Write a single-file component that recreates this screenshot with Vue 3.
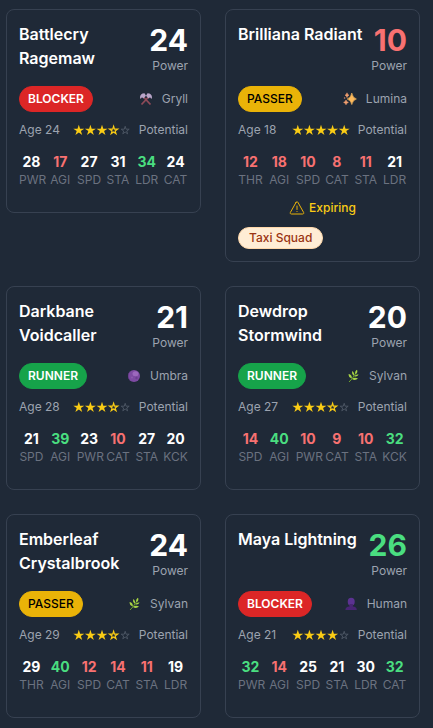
<script setup>
const starPath = 'M5.8 0.7 L7.1 4.7 L11.3 4.7 L7.9 7.1 L9.2 11.1 L5.8 8.6 L2.4 11.1 L3.7 7.1 L0.3 4.7 L4.5 4.7 Z'
const starOutline = 'M5.8 2.3 L6.7 5.2 L9.8 5.2 L7.3 7 L8.2 9.8 L5.8 8.1 L3.4 9.8 L4.3 7 L1.8 5.2 L4.9 5.2 Z'

const toStats = (labels, values) =>
  labels.split(' ').map((label, i) => ({ label, value: values[i] }))

const players = [
  { name: 'Battlecry Ragemaw', power: 24, role: 'Blocker', race: 'Gryll', age: 24, rating: 3.5,
    stats: toStats('PWR AGI SPD STA LDR CAT', [28, 17, 27, 31, 34, 24]) },
  { name: 'Brilliana Radiant', power: 10, role: 'Passer', race: 'Lumina', age: 18, rating: 5,
    stats: toStats('THR AGI SPD CAT STA LDR', [12, 18, 10, 8, 11, 21]), expiring: true, taxi: true },
  { name: 'Darkbane Voidcaller', power: 21, role: 'Runner', race: 'Umbra', age: 28, rating: 3.5,
    stats: toStats('SPD AGI PWR CAT STA KCK', [21, 39, 23, 10, 27, 20]) },
  { name: 'Dewdrop Stormwind', power: 20, role: 'Runner', race: 'Sylvan', age: 27, rating: 3.5,
    stats: toStats('SPD AGI PWR CAT STA KCK', [14, 40, 10, 9, 10, 32]) },
  { name: 'Emberleaf Crystalbrook', power: 24, role: 'Passer', race: 'Sylvan', age: 29, rating: 3.5,
    stats: toStats('THR AGI SPD CAT STA LDR', [29, 40, 12, 14, 11, 19]) },
  { name: 'Maya Lightning', power: 26, role: 'Blocker', race: 'Human', age: 21, rating: 4,
    stats: toStats('PWR AGI SPD STA LDR CAT', [32, 14, 25, 21, 30, 32]) }
]

const statTone = (v) => (v >= 32 ? 'high' : v <= 18 ? 'low' : '')
const powerTone = (v) => (v > 25 ? 'high' : v < 19 ? 'low' : '')
const starKind = (n, rating) => (n <= rating ? 'full' : n - 0.5 <= rating ? 'half' : 'empty')
</script>

<template>
  <main class="roster">
    <article v-for="p in players" :key="p.name" class="card">
      <header class="head">
        <h3 class="name">{{ p.name }}</h3>
        <div class="power">
          <div class="power-value" :class="powerTone(p.power)">{{ p.power }}</div>
          <div class="muted">Power</div>
        </div>
      </header>

      <div class="row role-row">
        <span class="role" :class="p.role.toLowerCase()">{{ p.role.toUpperCase() }}</span>
        <span class="race muted">
          <svg class="race-icon" viewBox="0 0 16 16" aria-hidden="true">
            <g v-if="p.race === 'Gryll'">
              <path d="M4.5 5 L12.5 13.5 M11.5 5 L3.5 13.5" stroke="#8f4a58" stroke-width="1.8" />
              <path d="M2 6.5 C2 4 3.5 2.3 6.5 2.2 L8 4.8 L5.5 7.5 L4 6.3 L2.6 8 Z" fill="#b9a5c9" />
              <path d="M14 6.5 C14 4 12.500 2.3 9.5 2.2 L8 4.8 L10.500 7.500 L12 6.3 L13.4 8 Z" fill="#b9a5c9" />
            </g>
            <g v-else-if="p.race === 'Lumina'">
              <path d="M9.800 2 Q10.600 6.800 14.400 8 Q10.600 9.200 9.800 13.600 Q9 9.200 5.200 8 Q9 6.800 9.800 2Z" fill="#fdba5c" stroke="#fdba5c" stroke-width=".6" />
              <path d="M5 1.800 Q5.300 3.800 7 4.200 Q5.300 4.600 5 6.600 Q4.700 4.600 3 4.200 Q4.700 3.800 5 1.800Z M4 9 Q4.400 11 6.400 11.400 Q4.400 11.800 4 13.800 Q3.600 11.800 1.600 11.400 Q3.600 11 4 9Z" fill="#f5a070" stroke="#f5a070" stroke-width=".5" />
              <circle cx="2.600" cy="7" r=".8" fill="#d98264" />
            </g>
            <g v-else-if="p.race === 'Umbra'">
              <circle cx="8" cy="8" r="6" fill="#7e4ba3" />
              <path d="M5 2.800 A6 6 0 0 0 6 13.700 A6.500 6.500 0 0 1 5 2.800Z" fill="#633888" />
              <ellipse cx="9.500" cy="5.800" rx="3" ry="2.500" fill="#9c68bd" />
              <circle cx="10.500" cy="10" r="1.200" fill="#6c3d91" />
              <circle cx="6" cy="9.500" r="1" fill="#8e5bb0" />
            </g>
            <g v-else-if="p.race === 'Sylvan'">
              <path d="M4 14 Q7 11 9 8 T11.500 2.500" fill="none" stroke="#6ea52c" stroke-width="1" />
              <g fill="#a9d545">
                <path d="M12 1.800 Q13.200 4.500 10.600 6.400 Q9.400 4 12 1.800Z" />
                <path d="M7.300 3 Q9.800 5 8.800 7.800 Q6.400 6 7.300 3Z" />
                <path d="M3.600 6 Q7.200 6.800 6.800 10.400 Q3.400 9.600 3.600 6Z" />
                <path d="M9.200 8.200 Q11 5.800 13.600 6.600 Q12 9.400 9.200 8.200Z" />
                <path d="M7 11 Q9.500 8.800 13 10.600 Q10 13.200 7 11Z" />
              </g>
            </g>
            <g v-else fill="#5b3291">
              <ellipse cx="8.200" cy="5.800" rx="3.500" ry="4" />
              <path d="M6.500 8 h3.400 v2.600 c2.500 .3 3.900 1.200 3.900 3.400 H2.400 c0-2.200 1.500-3.100 4.100-3.400Z" fill="#482574" />
            </g>
          </svg>
          {{ p.race }}
        </span>
      </div>

      <div class="row age-row muted">
        <span>Age {{ p.age }}</span>
        <span class="potential">
          <svg class="stars" viewBox="0 0 58 12" role="img" :aria-label="`${p.rating} of 5`">
            <g v-for="n in 5" :key="n" :transform="`translate(${(n - 1) * 11.6} 0)`">
              <path v-if="starKind(n, p.rating) === 'full'" :d="starPath" fill="#facc15" />
              <path v-else-if="starKind(n, p.rating) === 'half'" :d="starOutline" fill="none" stroke="#facc15" stroke-width="1.2" />
              <path v-else :d="starOutline" fill="none" stroke="#4b5563" stroke-width="1" />
            </g>
          </svg>
          Potential
        </span>
      </div>

      <dl class="stats">
        <div v-for="s in p.stats" :key="s.label" class="stat">
          <dt>{{ s.label }}</dt>
          <dd :class="statTone(s.value)">{{ s.value }}</dd>
        </div>
      </dl>

      <div v-if="p.expiring || p.taxi" class="flags">
        <div v-if="p.expiring" class="expiring">
          <svg class="warn" viewBox="0 0 16 16" fill="none" stroke="currentColor" stroke-linecap="round" stroke-linejoin="round" aria-hidden="true">
            <path d="M7.100 2.300 1.400 12.400 A1 1 0 0 0 2.300 14 H13.700 A1 1 0 0 0 14.600 12.400 L8.900 2.300 A1 1 0 0 0 7.100 2.300Z" />
            <path d="M8 6 V9.500 M8 11.500 V11.600" />
          </svg>
          Expiring
        </div>
        <span v-if="p.taxi" class="taxi">Taxi Squad</span>
      </div>
    </article>
  </main>
</template>

<style>
body {
  margin: 0;
  background: #1f2937;
}
</style>

<style scoped>
.roster {
  display: grid;
  grid-template-columns: repeat(2, minmax(0, 1fr));
  align-items: start;
  gap: 24px;
  padding: 9px 13px 10px 6px;
  font-family: Inter, "Liberation Sans", sans-serif;
  font-size: 12px;
  line-height: 16px;
  color: #fff;
}
.card {
  padding: 12px;
  border: 1px solid #374151;
  border-radius: 8px;
}
.head,
.row {
  display: flex;
  justify-content: space-between;
}
.head {
  gap: 8px;
}
.row {
  align-items: center;
}
.name {
  margin: 0;
  font-size: 16px;
  line-height: 24px;
  font-weight: 600;
}
.power {
  text-align: right;
}
.power-value {
  font-size: 30px;
  line-height: 36px;
  font-weight: 700;
}
.muted {
  color: #9ca3af;
}
.high {
  color: #4ade80;
}
.low {
  color: #f87171;
}
.role-row {
  margin-top: 12px;
}
.role {
  padding: 4px 8px;
  border: 1px solid transparent;
  border-radius: 13px;
  font-weight: 600;
}
.blocker {
  background: #dc2626;
  border-color: #dc2626;
}
.passer {
  background: #eab308;
  border-color: #eab308;
  color: #000;
  font-weight: 500;
}
.runner {
  background: #16a34a;
  border-color: #16a34a;
}
.race,
.potential {
  display: flex;
  align-items: center;
  gap: 8px;
}
.race-icon,
.warn {
  width: 16px;
  height: 16px;
}
.age-row {
  margin-top: 10px;
}
.stars {
  width: 58px;
  height: 12px;
}
.stats {
  display: grid;
  grid-template-columns: repeat(6, minmax(0, 1fr));
  gap: 4px;
  margin: 14px 0 12px;
}
.stat {
  display: flex;
  flex-direction: column-reverse;
  text-align: center;
}
dt {
  color: #6b7280;
}
dd {
  margin: 0;
  font-size: 14px;
  line-height: 20px;
  font-weight: 700;
}
.flags {
  display: flex;
  flex-direction: column;
  align-items: flex-start;
  gap: 11px;
}
.expiring {
  display: flex;
  align-self: center;
  gap: 4px;
  color: #facc15;
  font-weight: 500;
}
.warn {
  color: #eab308;
}
.taxi {
  padding: 2px 10px;
  border: 1px solid #fed7aa;
  border-radius: 11px;
  background: #ffedd5;
  color: #9a3412;
  font-weight: 500;
}
</style>
